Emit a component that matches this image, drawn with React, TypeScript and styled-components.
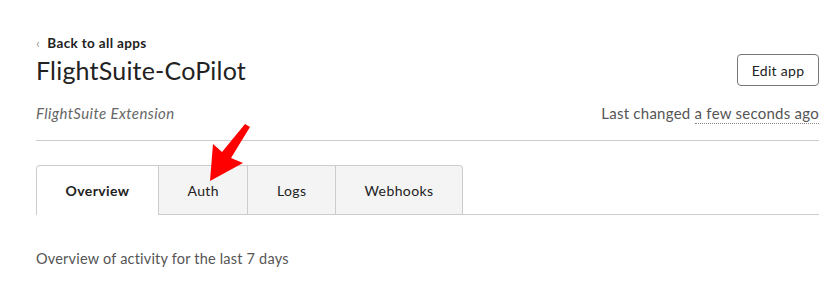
import styled, { createGlobalStyle } from 'styled-components';

const GlobalStyle = createGlobalStyle`
  body {
    margin: 0;
    background: #fff;
    font-family: "Lato", "Noto Sans", sans-serif;
    color: #222;
  }
`;

const tabs = ['Overview', 'Auth', 'Logs', 'Webhooks'];

const App = () => {
  return (
    <>
      <GlobalStyle />
      <Page>
        <Header>
          <div>
            <BackLink>
              <Chevron>‹</Chevron>Back to all apps
            </BackLink>
            <Title>FlightSuite-CoPilot</Title>
          </div>
          <EditButton>Edit app</EditButton>
        </Header>
        <MetaRow>
          <Subtitle>FlightSuite Extension</Subtitle>
          <Changed>
            Last changed <Dotted>a few seconds ago</Dotted>
          </Changed>
        </MetaRow>
        <Divider />
        <TabBar>
          {tabs.map((t, i) => (
            <Tab key={t} $active={i === 0} $first={i === 0} $last={i === tabs.length - 1}>
              {t}
            </Tab>
          ))}
          <TabFill />
        </TabBar>
        <Summary>Overview of activity for the last 7 days</Summary>
        <Arrow viewBox="0 0 837 284">
          <polygon
            points="210,181 213,144 222,152 245,124 250,127 231,158 243,163"
            fill="#ff0000"
          />
        </Arrow>
      </Page>
    </>
  );
};

const Page = styled.div`
  position: relative;
  width: 837px;
  height: 284px;
  box-sizing: border-box;
  padding: 34px 18px 0 36px;
`;

const Header = styled.div`
  display: flex;
  justify-content: space-between;
  align-items: flex-end;
`;

const BackLink = styled.div`
  display: flex;
  align-items: center;
  font-size: 13.5px;
  font-weight: 700;
  letter-spacing: 0.35px;
  color: #222;
  line-height: 18px;
`;

const Chevron = styled.span`
  color: #999;
  font-weight: 400;
  font-size: 14px;
  margin-right: 7px;
`;

const Title = styled.h1`
  margin: 1px 0 0;
  font-size: 25px;
  font-weight: 400;
  line-height: 34px;
  letter-spacing: 0.2px;
  color: #222;
`;

const EditButton = styled.button`
  width: 82px;
  height: 32px;
  margin-bottom: 1px;
  border: 1px solid #777;
  border-radius: 4px;
  background: #fff;
  font-family: inherit;
  font-size: 14px;
  letter-spacing: 0.3px;
  color: #222;
`;

const MetaRow = styled.div`
  display: flex;
  justify-content: space-between;
  align-items: center;
  margin-top: 14px;
  height: 24px;
  font-size: 15px;
  letter-spacing: 0.25px;
  color: #555;
`;

const Subtitle = styled.span`
  font-style: italic;
  letter-spacing: 0.4px;
  color: #666;
`;

const Changed = styled.span`
  color: #555;
`;

const Dotted = styled.span`
  border-bottom: 1px dotted #888;
  padding-bottom: 1px;
`;

const Divider = styled.div`
  height: 1px;
  background: #ccc;
  margin-top: 15px;
`;

const TabBar = styled.div`
  display: flex;
  margin-top: 24px;
  height: 50px;
`;

const Tab = styled.div<{ $active: boolean; $first: boolean; $last: boolean }>`
  display: flex;
  align-items: center;
  justify-content: center;
  box-sizing: border-box;
  padding: 0 28.5px;
  font-size: 14px;
  letter-spacing: 0.4px;
  font-weight: ${({ $active }) => ($active ? 700 : 400)};
  color: #222;
  background: ${({ $active }) => ($active ? '#fff' : '#f4f4f4')};
  border-top: 1px solid #ccc;
  border-right: 1px solid #ccc;
  border-left: ${({ $first }) => ($first ? '1px solid #ccc' : 'none')};
  border-bottom: ${({ $active }) => ($active ? 'none' : '1px solid #ccc')};
  border-top-left-radius: ${({ $first }) => ($first ? '4px' : '0')};
  border-top-right-radius: ${({ $last }) => ($last ? '4px' : '0')};
`;

const TabFill = styled.div`
  flex: 1;
  border-bottom: 1px solid #ccc;
`;

const Summary = styled.p`
  margin: 35px 0 0;
  font-size: 14.5px;
  letter-spacing: 0.2px;
  color: #555;
`;

const Arrow = styled.svg`
  position: absolute;
  left: 0;
  top: 0;
  width: 837px;
  height: 284px;
  pointer-events: none;
`;

export default App;
